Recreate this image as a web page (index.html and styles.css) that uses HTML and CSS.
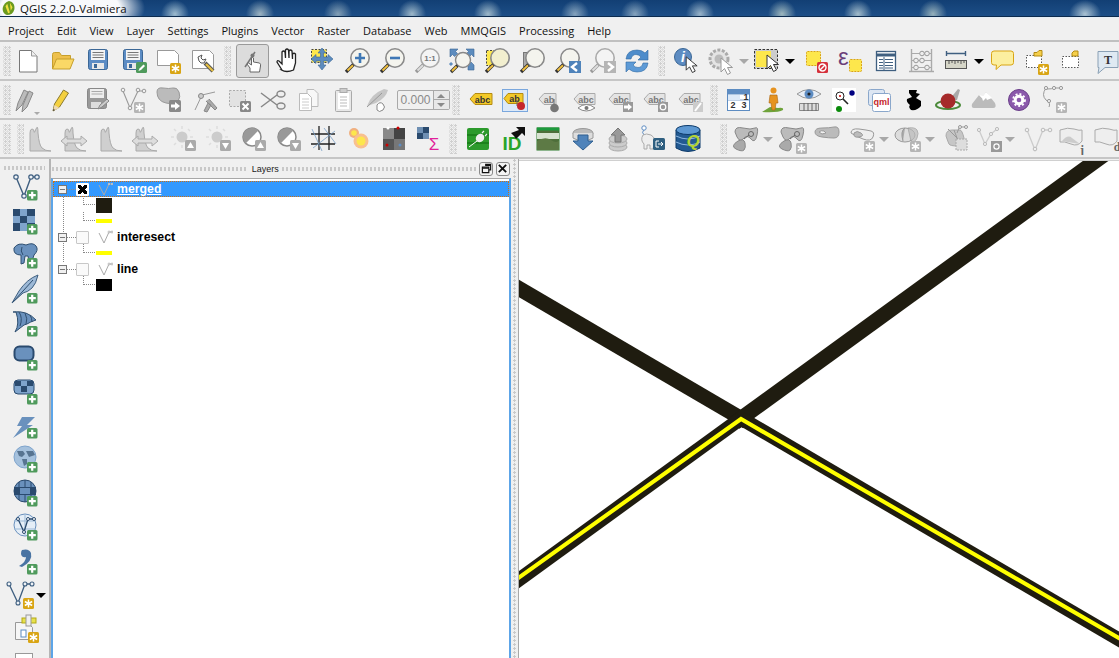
FILE: index.html
```html
<!DOCTYPE html>
<html lang="en">
<head>
<meta charset="utf-8">
<title>QGIS 2.2.0-Valmiera</title>
<link rel="stylesheet" href="styles.css">
</head>
<body>
<svg class="defs" aria-hidden="true">
<defs>
<symbol id="plus" viewBox="0 0 32 32"><rect x="17" y="19" width="10.5" height="10.5" rx="1.5" fill="#4f9a5c"/><path d="M22.2 20.800v7M18.800 24.200h7" stroke="#fff" stroke-width="2.2"/></symbol>
<symbol id="gold" viewBox="0 0 32 32"><rect x="18" y="18" width="11" height="11" rx="1.5" fill="#d9a514"/><path d="M23.5 19.5v8M19.8 21.5l7.4 4M19.8 25.5l7.4-4" stroke="#fff" stroke-width="1.5"/></symbol>
<symbol id="grey" viewBox="0 0 32 32"><rect x="18" y="18" width="11" height="11" rx="1.5" fill="#b5b5b5"/><path d="M23.5 19.5v8M19.8 21.5l7.4 4M19.8 25.5l7.4-4" stroke="#fff" stroke-width="1.5"/></symbol>
<symbol id="mag" viewBox="0 0 32 32"><circle cx="19" cy="13" r="9.2" fill="#f4f4ee" stroke="#8a8a8a" stroke-width="1.6"/><path d="M12.500 19.500L5 27" stroke="#333" stroke-width="3.4"/><path d="M12 20.200L6.500 25.500" stroke="#f0c040" stroke-width="1.9"/></symbol>
<symbol id="magg" viewBox="0 0 32 32"><circle cx="19" cy="13" r="9.2" fill="#f4f4f4" stroke="#aaa" stroke-width="1.6"/><path d="M12.500 19.500L5 27" stroke="#999" stroke-width="3.4"/><path d="M12 20.200L6.500 25.500" stroke="#ddd" stroke-width="1.9"/></symbol>
<symbol id="new" viewBox="0 0 32 32"><path d="M7.5 5.5h12l5.5 5.5v16H7.500z" fill="#fff" stroke="#777" stroke-width="1"/><path d="M19.500 5.500v5.500H25" fill="#eee" stroke="#999"/></symbol>
<symbol id="open" viewBox="0 0 32 32"><path d="M5.500 24V9.500q0-2 2-2h5l2 3h9v4" fill="#eec04c" stroke="#c69f2c"/><path d="M5.500 24l4-10h17.500l-4 10z" fill="#fad866" stroke="#c69f2c"/></symbol>
<symbol id="save" viewBox="0 0 32 32"><rect x="6.500" y="4.500" width="19" height="20" rx="2" fill="#5c8cc4" stroke="#3b6796"/><rect x="9" y="5" width="14" height="10" fill="#f4f4f4"/><path d="M10.500 7.500h11M10.500 10h11M10.500 12.500h11" stroke="#777"/><rect x="10" y="18" width="12" height="6" fill="#e8e8e8"/><rect x="12" y="19" width="3" height="4" fill="#3b6796"/></symbol>
<symbol id="sedit" viewBox="0 0 32 32"><use href="#save"/><rect x="19" y="17" width="11" height="11" rx="1.500" fill="#4f9a5c"/><path d="M21.500 26l1-2.500 4-4 1.500 1.500-4 4z" fill="#fff"/></symbol>
<symbol id="comp" viewBox="0 0 32 32"><path d="M5.500 5.500h17l4 4v11h-21z" fill="#fff" stroke="#999"/><use href="#gold"/></symbol>
<symbol id="mgr" viewBox="0 0 32 32"><path d="M5.500 5.500h17l4 4v14h-21z" fill="#fff" stroke="#999"/><path d="M11 12l4-2-1 3 2 2 3-1-2 4-3 0-2-2z" fill="#fff" stroke="#555"/><path d="M18 18l8 8" stroke="#555" stroke-width="4"/><path d="M19 19l7 7" stroke="#e6c042" stroke-width="2.200"/></symbol>
<symbol id="touch" viewBox="0 0 32 32"><path d="M9 22L19 7" stroke="#777" stroke-width="1.500"/><circle cx="16.500" cy="10.500" r="2" fill="#777"/><path d="M14 27v-4l-3-4 1.500-1 3 2v-7q1.500-1 2 0v4l6 1q1.500 1 1 3l-1 6z" fill="#fff" stroke="#666"/></symbol>
<symbol id="pan" viewBox="0 0 32 32"><path d="M11 25l-5-8q0-2 2-1l3 3V7q1.500-2 3 0l.5 6V5q1.500-2 3 0l.5 8V6q1.500-2 3 0l.5 8V9q1.500-1.500 3 0v9l-2 7q-7 3-12 0z" fill="#fff" stroke="#222" stroke-width="1.300"/></symbol>
<symbol id="panmap" viewBox="0 0 32 32"><rect x="5.500" y="4.500" width="15" height="13" fill="#fde74c" stroke="#444" stroke-dasharray="2 1.500"/><path d="M16 3l4 5h-2.500v4H22V9.500l5 4.500-5 4.500V16h-4.500v4H20l-4 5-4-5h2.500v-4H10v2.500L5 14l5-4.500V12h4.500V8H12z" fill="#5d8cbe" stroke="#3b6796" stroke-width=".6"/></symbol>
<symbol id="zin" viewBox="0 0 32 32"><use href="#mag"/><path d="M19 8v10M14 13h10" stroke="#3f78b5" stroke-width="2.600"/></symbol>
<symbol id="zout" viewBox="0 0 32 32"><use href="#mag"/><path d="M14 13h10" stroke="#3f78b5" stroke-width="2.600"/></symbol>
<symbol id="z11" viewBox="0 0 32 32"><use href="#magg"/><text x="19" y="16" class="st st8 g6" text-anchor="middle">1:1</text></symbol>
<symbol id="zfull" viewBox="0 0 32 32"><path d="M4 4h8l-2.500 2.500 2 2-3 3-2-2L4 12zM28 4v8l-2.500-2.500-2 2-3-3 2-2L20 4zM22 20l3-3 3 3v5h-6z" fill="#5d8cbe" stroke="#3b6796" stroke-width=".6"/><path d="M4 18l2 2" stroke="#5d8cbe" stroke-width="3"/><circle cx="17" cy="15" r="7.500" fill="#f4f4ee" stroke="#888" stroke-width="1.400"/><path d="M11.500 20.500L5 27" stroke="#333" stroke-width="3.200"/><path d="M10.500 21.500L6 26" stroke="#f0c040" stroke-width="1.800"/></symbol>
<symbol id="zsel" viewBox="0 0 32 32"><rect x="5.500" y="5.500" width="16" height="15" fill="#fde74c" stroke="#444" stroke-dasharray="2 1.500"/><circle cx="19" cy="13" r="9.200" fill="#f2efcf" stroke="#8a8a8a" stroke-width="1.600"/><path d="M12.500 19.500L5 27" stroke="#333" stroke-width="3.400"/><path d="M12 20.200L6.500 25.500" stroke="#f0c040" stroke-width="1.900"/></symbol>
<symbol id="zlay" viewBox="0 0 32 32"><rect x="7.500" y="7.500" width="16" height="14" fill="#aaa" stroke="#777"/><use href="#mag"/></symbol>
<symbol id="zlast" viewBox="0 0 32 32"><use href="#mag"/><rect x="18" y="16" width="12" height="12" fill="#4f83ba"/><path d="M26 18l-5 4 5 4" fill="none" stroke="#fff" stroke-width="2.400"/></symbol>
<symbol id="znext" viewBox="0 0 32 32"><use href="#magg"/><rect x="18" y="16" width="12" height="12" fill="#b5b5b5"/><path d="M22 18l5 4-5 4" fill="none" stroke="#fff" stroke-width="2.400"/></symbol>
<symbol id="refresh" viewBox="0 0 32 32"><path d="M5 14q1-9 11-9 5 0 8 3l3-3v10h-10l3-3q-2-2.500-5-2.500-4 0-5 4.500z" fill="#4d8ccb" stroke="#2f6aa3" stroke-width=".6"/><path d="M27 18q-1 9-11 9-5 0-8-3l-3 3V17h10l-3 3q2 2.500 5 2.500 4 0 5-4.500z" fill="#5d9ad6" stroke="#2f6aa3" stroke-width=".6"/></symbol>
<symbol id="cursor" viewBox="0 0 32 32"><path d="M16 13v14l3.500-3.500 3 6 3-1.500-3-5.500h5z" fill="#fff" stroke="#333"/></symbol>
<symbol id="ident" viewBox="0 0 32 32"><circle cx="13" cy="12" r="8.500" fill="#5d8cc2" stroke="#3b6796"/><text x="13" y="17" class="st st14 w i2" text-anchor="middle">i</text><use href="#cursor" transform="translate(1 -.5) scale(.95)"/></symbol>
<symbol id="action" viewBox="0 0 32 32"><circle cx="14" cy="14" r="9" fill="#e4e4e4" stroke="#aaa" stroke-width="3" stroke-dasharray="3 1.500"/><circle cx="14" cy="14" r="4.500" fill="#bbb"/><path d="M16 13v14l3.500-3.500 3 6 3-1.500-3-5.500h5z" fill="#fff" stroke="#999"/></symbol>
<symbol id="select" viewBox="0 0 32 32"><rect x="3.500" y="4.500" width="23" height="19" fill="#ccc" stroke="#333" stroke-dasharray="2.500 1.500"/><rect x="5" y="6" width="15" height="16" fill="#fde74c"/><use href="#cursor" transform="translate(0 -3)"/></symbol>
<symbol id="desel" viewBox="0 0 32 32"><rect x="6.500" y="6.500" width="14" height="14" rx="1" fill="#fde74c" stroke="#d9a514" stroke-dasharray="2 1"/><rect x="17" y="17" width="11" height="11" rx="1.500" fill="#d5303a"/><circle cx="22.500" cy="22.500" r="3.500" fill="none" stroke="#fff" stroke-width="1.400"/><path d="M20 25l5-5" stroke="#fff" stroke-width="1.400"/></symbol>
<symbol id="expr" viewBox="0 0 32 32"><text x="3" y="20" class="st st22 pur">&#949;</text><rect x="14.500" y="14.500" width="12" height="12" rx="1" fill="#fde74c" stroke="#d9a514" stroke-dasharray="2 1"/></symbol>
<symbol id="table" viewBox="0 0 32 32"><rect x="6.500" y="6.500" width="19" height="19" fill="#fff" stroke="#3f5f80" stroke-width="1.300"/><path d="M7 10h18" stroke="#3f5f80" stroke-width="3"/><path d="M9 14.500h4M15 14.500h8M9 17.500h4M15 17.500h8M9 20.500h4M15 20.500h8M9 23h4M15 23h8M14 12v13" stroke="#3f5f80"/></symbol>
<symbol id="stats" viewBox="0 0 32 32"><path d="M6.500 4v22M26.500 4v22M4 26.500h25" stroke="#aaa" stroke-width="1.400"/><path d="M6.500 8.500h20M6.500 15.500h20M6.500 22.500h20" stroke="#aaa"/><g fill="#eee" stroke="#999"><circle cx="17" cy="8.500" r="2.300"/><circle cx="22" cy="8.500" r="2.300"/><circle cx="11" cy="15.500" r="2.300"/><circle cx="17" cy="15.500" r="2.300"/><circle cx="11" cy="22.500" r="2.300"/><circle cx="22" cy="22.500" r="2.300"/></g></symbol>
<symbol id="measure" viewBox="0 0 32 32"><path d="M6 8.500h20M6.500 6v5M25.500 6v5" stroke="#3f5f80" stroke-width="1.400"/><rect x="5.500" y="15.500" width="21" height="8" fill="#d6d6c8" stroke="#555"/><path d="M9 16v3M12 16v2M15 16v3M18 16v2M21 16v3M24 16v2" stroke="#555"/></symbol>
<symbol id="annot" viewBox="0 0 32 32"><path d="M8 6h17q2.500 0 2.500 2.500v9q0 2.500-2.500 2.500H15l-5 4.500 .5-4.500H8q-2.500 0-2.500-2.500v-9Q5.500 6 8 6z" fill="#fcefa0" stroke="#d9a514"/></symbol>
<symbol id="flbl" viewBox="0 0 32 32"><rect x="5.500" y="10.500" width="15" height="12" fill="#fff" stroke="#555" stroke-dasharray="1.500 1.500"/><path d="M14 10V6.500h3l2-2h3v5.500h-5z" fill="#f5cf4a" stroke="#b48b12" transform="translate(-1 1)"/><use href="#gold" transform="translate(-1 1)"/></symbol>
<symbol id="flbl2" viewBox="0 0 32 32"><rect x="6.500" y="11.500" width="16" height="11" fill="#fff" stroke="#555" stroke-dasharray="1.500 1.500"/><path d="M16 11V8l2-2h4v5h-5z" fill="#f5cf4a" stroke="#b48b12"/></symbol>
<symbol id="tann" viewBox="0 0 32 32"><path d="M7 6.500h20v16H14l-7 6 1-6H7z" fill="#dfe9f2" stroke="#8aa0b5"/><text x="17" y="19" class="st st12 serif" text-anchor="middle">T</text></symbol>
<symbol id="pencils" viewBox="0 0 32 32"><path d="M5 27l2-8L13 6l4 2-6 13zM11 28l1-7 6-14 4 2-6 14z" fill="#bbb" stroke="#888"/><path d="M23 28h6l-3 3z" fill="#aaa"/></symbol>
<symbol id="pencil" viewBox="0 0 32 32"><path d="M7 27l1.500-7 9-14 5 3-9 14z" fill="#f4d03f" stroke="#8a7a30"/><path d="M7 27l1.500-6 5 3z" fill="#eed9b0"/><path d="M7 27l.500-2 1.500 1z" fill="#222"/></symbol>
<symbol id="sgrey" viewBox="0 0 32 32"><rect x="6.500" y="4.500" width="19" height="20" rx="2" fill="#999" stroke="#888"/><rect x="9" y="5" width="14" height="9" fill="#eee"/><path d="M10.500 7.500h11M10.500 10h11" stroke="#aaa"/><rect x="10" y="18" width="10" height="6" fill="#ddd"/><path d="M17 25l2-4 7-6 2 2-7 6z" fill="#ccc" stroke="#888"/></symbol>
<symbol id="addv" viewBox="0 0 32 32"><path d="M7 7l7 17L22 7M7 7h0M22 7h6" fill="none" stroke="#999" stroke-width="1.100"/><g fill="#f0f0f0" stroke="#999"><circle cx="7" cy="6" r="1.800"/><circle cx="14" cy="24" r="1.800"/><circle cx="22" cy="6" r="1.800"/><circle cx="28" cy="7" r="1.800"/></g><use href="#grey"/></symbol>
<symbol id="blobm" viewBox="0 0 32 32"><path d="M5 8q0-5 6-4 6 1 10 0t6 4-1 9-12 2-9-11z" fill="#bbb" stroke="#999"/><rect x="17" y="16" width="12" height="12" rx="1.500" fill="#8a8a8a"/><path d="M19 20.500h4V18l5 4-5 4v-2.500h-4z" fill="#fff"/></symbol>
<symbol id="node" viewBox="0 0 32 32"><path d="M6 26l7-15L26 8" fill="none" stroke="#999"/><circle cx="12" cy="12" r="2.500" fill="#ccc" stroke="#888"/><path d="M15 27l4-8 3 2-4 7zM17 17l9 9 2-2-8-9" fill="#aaa" stroke="#888"/></symbol>
<symbol id="delete" viewBox="0 0 32 32"><rect x="6.500" y="6.500" width="16" height="16" fill="#e2e2e2" stroke="#aaa" stroke-dasharray="2 1.500"/><rect x="17" y="17" width="11" height="11" rx="1.500" fill="#888"/><path d="M19.500 19.500l6 6M25.500 19.500l-6 6" stroke="#fff" stroke-width="2"/></symbol>
<symbol id="scis" viewBox="0 0 32 32"><path d="M4 9l16 12M4 23L20 11" stroke="#888" stroke-width="1.500"/><ellipse cx="24" cy="10" rx="4" ry="3" fill="#eee" stroke="#888" stroke-width="1.400"/><ellipse cx="24" cy="22" rx="4" ry="3" fill="#eee" stroke="#888" stroke-width="1.400"/></symbol>
<symbol id="copy" viewBox="0 0 32 32"><path d="M15 5.500h7l4 4v13H15z" fill="#f8f8f8" stroke="#bbb"/><path d="M7.500 9.500h8l4 4v13H7.500z" fill="#fff" stroke="#bbb"/><path d="M10 15h7M10 18h7M10 21h7M10 24h7" stroke="#ccc"/></symbol>
<symbol id="paste" viewBox="0 0 32 32"><rect x="8.500" y="6.500" width="16" height="21" rx="1" fill="#e8e8e8" stroke="#aaa"/><rect x="11" y="9" width="11" height="16" fill="#fff"/><rect x="13" y="4.500" width="7" height="4" fill="#ccc" stroke="#aaa"/><path d="M13 13h7M13 16h7M13 19h7M13 22h7" stroke="#bbb"/></symbol>
<symbol id="stamp" viewBox="0 0 32 32"><path d="M5 22Q9 10 22 5l4 1q-2 8-12 13z" fill="#c6c6c6"/><path d="M5 23L20 9" stroke="#999"/><path d="M15 21q3-4 6-1t0 6q-4 3-6 0z" fill="#fff" stroke="#888"/></symbol>
<symbol id="lbl" viewBox="0 0 32 32"><path d="M11 9.500h17v11H11l-5-5.500z" fill="#f3c928" stroke="#b48b12"/><text x="18.500" y="18.500" class="st st9b" text-anchor="middle">abc</text></symbol>
<symbol id="lblp" viewBox="0 0 32 32"><rect x="3.500" y="5.500" width="25" height="22" fill="#dce9f8" stroke="#7aa7dd"/><path d="M9 9.500h15v10H9l-4-5z" fill="#f3c928" stroke="#b48b12"/><text x="15.500" y="18" class="st st9b" text-anchor="middle">ab</text><path d="M18 16v6" stroke="#666"/><circle cx="22" cy="22" r="4" fill="#c5262c"/></symbol>
<symbol id="lgrey" viewBox="0 0 32 32"><path d="M10 9.500h16v11H10l-5-5.500z" fill="#e4e4e4" stroke="#aaa"/><text x="17" y="18.500" class="st st9b g7" text-anchor="middle">abc</text></symbol>
<symbol id="lpin" viewBox="0 0 32 32"><path d="M10 9.500h12v11H10l-5-5.500z" fill="#e4e4e4" stroke="#aaa"/><text x="15" y="18.500" class="st st9b g7" text-anchor="middle">ab</text><path d="M20 15v8" stroke="#666"/><circle cx="20.500" cy="24" r="4.300" fill="#777"/></symbol>
<symbol id="leye" viewBox="0 0 32 32"><use href="#lgrey"/><path d="M9 24q8-7 17 0-9 6-17 0z" fill="#fff" stroke="#888"/><circle cx="17.500" cy="24" r="2" fill="#777"/></symbol>
<symbol id="lmove" viewBox="0 0 32 32"><use href="#lgrey"/><rect x="19" y="18" width="10" height="10" fill="#999"/><path d="M20 21.500h4v-2l4 3.500-4 3.500v-2h-4z" fill="#fff"/></symbol>
<symbol id="lrot" viewBox="0 0 32 32"><use href="#lgrey"/><rect x="19" y="18" width="10" height="10" fill="#999"/><circle cx="24" cy="23" r="2.800" fill="none" stroke="#fff" stroke-width="1.200"/></symbol>
<symbol id="lsize" viewBox="0 0 32 32"><use href="#lgrey"/><rect x="19" y="18" width="10" height="10" fill="#ccc"/><path d="M21 27l6-8" stroke="#fff" stroke-width="2"/></symbol>
<symbol id="ltab" viewBox="0 0 32 32"><rect x="4.500" y="5.500" width="22" height="21" fill="#fff" stroke="#5d8cc2"/><path d="M5 8h21" stroke="#5d8cc2" stroke-width="5"/><path d="M5 16h21" stroke="#5d8cc2" stroke-width=".8"/><rect x="5" y="11" width="12" height="5" fill="#dce9f8"/><text x="23" y="15.500" class="st st9b" text-anchor="middle">1</text><text x="10" y="24" class="st st9b" text-anchor="middle">2</text><text x="21" y="24" class="st st9b" text-anchor="middle">3</text></symbol>
<symbol id="person" viewBox="0 0 32 32"><path d="M4 28l8-5 8 1q6-1 5 2-5 3-21 2z" fill="#6fa33b"/><circle cx="15.500" cy="6.500" r="3" fill="#e69320"/><path d="M12 11h7l1 8h-2l-1 7h-3l-1-7h-2z" fill="#e69320" stroke="#a96510" stroke-width=".6"/></symbol>
<symbol id="eyet" viewBox="0 0 32 32"><path d="M4 10q12-9 24 0-12 9-24 0z" fill="#e8eef6" stroke="#999"/><circle cx="16" cy="10" r="4.500" fill="#5d8cc2"/><circle cx="16" cy="10" r="1.600" fill="#222"/><path d="M6.500 19.500h19v7h-19z" fill="#ddd" stroke="#888"/><path d="M11 19v8M15 19v8M19 19v8M23 19v8" stroke="#666"/></symbol>
<symbol id="search" viewBox="0 0 32 32"><rect x="4" y="4" width="24" height="24" fill="#fff"/><circle cx="24" cy="9" r="2.700" fill="#000080"/><circle cx="11" cy="25" r="3" fill="#0a8a0a"/><circle cx="12" cy="12" r="4" fill="#fff" stroke="#222"/><circle cx="12" cy="12" r="1" fill="#c00"/><path d="M15 15l5 5" stroke="#222" stroke-width="1.600"/></symbol>
<symbol id="qml" viewBox="0 0 32 32"><rect x="5.500" y="5.500" width="16" height="16" rx="2" fill="#dce6f3" stroke="#8aa7cb"/><rect x="9.500" y="9.500" width="18" height="18" rx="2" fill="#fff" stroke="#8aa7cb"/><text x="18.500" y="21" class="st st9b red" text-anchor="middle">qml</text></symbol>
<symbol id="blk" viewBox="0 0 32 32"><path d="M11 6h8l-1 3 4 1-4 4 5 3v5q-4 5-10 4-3-3-1-5-4-3-3-6l5-2-3-4z" fill="#000"/></symbol>
<symbol id="redb" viewBox="0 0 32 32"><path d="M16 16L25 5l2 1-3 10z" fill="#aaa"/><ellipse cx="15" cy="21" rx="12" ry="4" fill="none" stroke="#4b8a3a" stroke-width="2"/><circle cx="15" cy="17" r="7.500" fill="#a52a2a"/></symbol>
<symbol id="mount" viewBox="0 0 32 32"><path d="M6 24q-3 0-2-4l7-9 3 3 4-6 9 11q2 5-2 5z" fill="#bbb"/><path d="M11 11l3 3 1 3 3-3 1 2 5-2-6-6-3 4z" fill="#fff"/></symbol>
<symbol id="purple" viewBox="0 0 32 32"><circle cx="16" cy="16" r="10.500" fill="#8b59ab" stroke="#6b3f8a"/><circle cx="16" cy="16" r="3.800" fill="none" stroke="#fff" stroke-width="3" /><circle cx="16" cy="16" r="6" fill="none" stroke="#fff" stroke-width="1.800" stroke-dasharray="2 2"/></symbol>
<symbol id="gverts" viewBox="0 0 32 32"><path d="M8 4q-5 7 0 12 5 3 3 7M9 5q5 0 7-1h6" fill="none" stroke="#999"/><g fill="#f0f0f0" stroke="#999"><circle cx="8" cy="4" r="1.600"/><circle cx="16" cy="4" r="1.600"/><circle cx="23" cy="4" r="1.600"/><circle cx="11" cy="17" r="1.600"/></g><use href="#grey"/></symbol>
<symbol id="hist" viewBox="0 0 32 32"><path d="M6 28V10q0-4 2-4t2 2.500T12 6t2 4q1 12 4 15t9 3z" fill="#cfcfcf" stroke="#aaa"/></symbol>
<symbol id="hista" viewBox="0 0 32 32"><use href="#hist"/><path d="M2 18l6-5v3h14v-3l6 5-6 5v-3H8v3z" fill="#ddd" stroke="#aaa"/></symbol>
<symbol id="sunu" viewBox="0 0 32 32"><circle cx="14" cy="14" r="5.500" fill="#ccc"/><path d="M14 3v3M14 22v3M3 14h3M22 14h3M6 6l2 2M20 6l2 2M6 22l2-2" stroke="#ddd" stroke-width="1.500"/><rect x="17" y="17" width="11" height="11" rx="1.500" fill="#aaa"/><path d="M22.500 19l3.500 6h-7z" fill="#fff"/></symbol>
<symbol id="sund" viewBox="0 0 32 32"><circle cx="14" cy="14" r="5.500" fill="#ccc"/><path d="M14 3v3M14 22v3M3 14h3M22 14h3M6 6l2 2M20 6l2 2M6 22l2-2" stroke="#ddd" stroke-width="1.500"/><rect x="17" y="17" width="11" height="11" rx="1.500" fill="#aaa"/><path d="M22.500 26l3.500-6h-7z" fill="#fff"/></symbol>
<symbol id="ctu" viewBox="0 0 32 32"><circle cx="14" cy="14" r="9" fill="#fff" stroke="#888" stroke-width="1.500"/><path d="M20.400 7.600A9 9 0 0 1 7.600 20.400z" fill="#999" transform="rotate(180 14 14)"/><rect x="17" y="17" width="11" height="11" rx="1.500" fill="#aaa"/><path d="M22.500 19l3.500 6h-7z" fill="#fff"/></symbol>
<symbol id="ctd" viewBox="0 0 32 32"><circle cx="14" cy="14" r="9" fill="#fff" stroke="#888" stroke-width="1.500"/><path d="M20.400 7.600A9 9 0 0 1 7.600 20.400z" fill="#999" transform="rotate(180 14 14)"/><rect x="17" y="17" width="11" height="11" rx="1.500" fill="#aaa"/><path d="M22.500 26l3.500-6h-7z" fill="#fff"/></symbol>
<symbol id="grid" viewBox="0 0 32 32"><path d="M3 11h24M3 21h24M11 3v24M21 3v24" stroke="#222" stroke-width="1.300"/><path d="M4 6l10 22M16 5l12 16M5 25l22-17" stroke="#7aa0c6" stroke-width=".8"/></symbol>
<symbol id="heat" viewBox="0 0 32 32"><circle cx="11" cy="10" r="5" fill="#f0b080"/><circle cx="18" cy="18" r="7.500" fill="#f8c090"/><circle cx="11" cy="10" r="2.800" fill="#fde74c"/><circle cx="18" cy="18" r="4.500" fill="#fde74c"/></symbol>
<symbol id="rstr" viewBox="0 0 32 32"><rect x="5" y="5" width="11" height="11" fill="#888"/><rect x="16" y="5" width="11" height="11" fill="#444"/><rect x="5" y="16" width="11" height="11" fill="#555"/><rect x="16" y="16" width="11" height="11" fill="#777"/><circle cx="10" cy="5" r="1.500" fill="#fff"/><circle cx="20" cy="5" r="1.500" fill="#c00"/><circle cx="9" cy="22" r="1.500" fill="#c00"/><circle cx="22" cy="22" r="1.500" fill="#5d8cc2"/></symbol>
<symbol id="sigma" viewBox="0 0 32 32"><rect x="4" y="4" width="6" height="6" fill="#6e8fb3"/><rect x="10" y="4" width="6" height="6" fill="#2a4a6e"/><rect x="4" y="10" width="6" height="6" fill="#2a4a6e"/><rect x="10" y="10" width="6" height="6" fill="#6e8fb3"/><text x="21" y="27" class="st st16 pink" text-anchor="middle">&#931;</text></symbol>
<symbol id="plug" viewBox="0 0 32 32"><rect x="5" y="5" width="22" height="22" rx="2" fill="#2c9a2c"/><path d="M5 12h22M5 20h22" stroke="#0d6a0d"/><path d="M7 24l8-6" stroke="#fff"/><ellipse cx="18" cy="15" rx="4" ry="4.500" fill="#eee" transform="rotate(45 18 15)"/><path d="M20 10l2-2M23 13l2-2" stroke="#eee" stroke-width="1.200"/></symbol>
<symbol id="idk" viewBox="0 0 32 32"><text x="15" y="27" class="st st20b grn" text-anchor="middle">ID</text><path d="M14 10l8-3-3-3h9v9l-3-3-6 6-2-3z" fill="#111"/></symbol>
<symbol id="photo" viewBox="0 0 32 32"><rect x="5" y="5" width="22" height="22" fill="#4e6e3a" stroke="#2b7a2b"/><rect x="5" y="4.500" width="22" height="3" fill="#1d9a3d"/><rect x="5" y="10" width="22" height="6" fill="#d7e2d0"/><path d="M5 18q8-5 14-1t8 0v10H5z" fill="#5d7a45"/></symbol>
<symbol id="down" viewBox="0 0 32 32"><ellipse cx="16" cy="10" rx="10" ry="4.500" fill="#bbb" stroke="#999"/><path d="M6 10v5q10 6 20 0v-5" fill="#ddd" stroke="#999"/><path d="M11 12h10v6h5l-10 9-10-9h5z" fill="#4f83ba" stroke="#2f5f90"/></symbol>
<symbol id="up" viewBox="0 0 32 32"><g fill="#ccc" stroke="#aaa"><ellipse cx="16" cy="24" rx="9" ry="4"/><ellipse cx="16" cy="20" rx="9" ry="4"/><ellipse cx="16" cy="16" rx="9" ry="4"/></g><path d="M16 5l7 7h-4v7h-6v-7H9z" fill="#999" stroke="#777"/></symbol>
<symbol id="eleph" viewBox="0 0 32 32"><path d="M7 12q-3-3 0-5" fill="none" stroke="#5d8cc2"/><circle cx="7" cy="5" r="2.200" fill="#fff" stroke="#5d8cc2"/><path d="M6 12q3-2 8 0 6 4 3 10l-1 4h-3v-4h-3v4H7v-5q-4-4-1-9z" fill="#eee" stroke="#aaa"/><rect x="16" y="15" width="12" height="12" rx="1.500" fill="#2f5f80"/><path d="M22 18h-3v6h3M21 21h5M24 19l2 2-2 2" fill="none" stroke="#fff"/></symbol>
<symbol id="db" viewBox="0 0 32 32"><path d="M4 7v18q12 7 24 0V7" fill="#235a92" stroke="#0d3a6a"/><ellipse cx="16" cy="7" rx="12" ry="4.500" fill="#5d98d2" stroke="#0d3a6a"/><path d="M4 13q12 6 24 0M4 19q12 6 24 0" fill="none" stroke="#8ab5e0"/><text x="21" y="24" class="st st16 lime i2" text-anchor="middle">Q</text></symbol>
<symbol id="shape" viewBox="0 0 32 32"><path d="M5 9q0-6 8-4t12 0 2 7-6 4-8 0-8-7z" fill="#bbb" stroke="#888"/><path d="M8 18q6-3 7 2t-1 7-8-1 2-8z" fill="#aaa" stroke="#888"/><circle cx="21" cy="11" r="2.500" fill="none" stroke="#666"/><path d="M14 16l5-4" stroke="#666"/></symbol>
<symbol id="shapes" viewBox="0 0 32 32"><use href="#shape"/><use href="#grey" transform="translate(2 2)"/></symbol>
<symbol id="ring" viewBox="0 0 32 32"><path d="M4 9q0-4 7-4t12-1 5 5-5 6-12-1-7-5z" fill="#bbb" stroke="#999"/><path d="M8 9q2-2 5-1l2 2-4 1z" fill="#f0f0f0" stroke="#999"/></symbol>
<symbol id="part" viewBox="0 0 32 32"><path d="M5 10q0-5 8-4t12 2 2 6-10 2-12-6z" fill="#eee" stroke="#999"/><path d="M8 10q3-3 7 0t-2 4-5-4z" fill="#bbb" stroke="#999"/><use href="#grey"/></symbol>
<symbol id="merge" viewBox="0 0 32 32"><ellipse cx="13" cy="12" rx="10" ry="7" fill="#ddd" stroke="#999"/><path d="M13 5q-5 3-2 13" fill="#aaa" stroke="#999"/><path d="M16 5q7-1 9 2t0 8-6 3z" fill="#bbb" stroke="#999" opacity=".7"/><use href="#grey"/></symbol>
<symbol id="union" viewBox="0 0 32 32"><path d="M6 13q0-6 6-6t8 0 4 8-6 8-9-2-3-8z" fill="#c6c6c6" stroke="#aaa"/><path d="M14 7l6 16M8 6l14 14" stroke="#999"/><rect x="16" y="16" width="11" height="11" fill="#ddd" stroke="#aaa" stroke-dasharray="2 1"/><g fill="#eee" stroke="#999"><circle cx="20" cy="4" r="1.500"/><circle cx="26" cy="4" r="1.500"/></g><path d="M21 4h4M19 5l-2 5" stroke="#999"/></symbol>
<symbol id="vsplit" viewBox="0 0 32 32"><path d="M6 7l6 14 6-10 6-5" fill="none" stroke="#ccc" stroke-width="1.300"/><g fill="#eee" stroke="#bbb"><circle cx="6" cy="7" r="1.600"/><circle cx="12" cy="21" r="1.600"/><circle cx="18" cy="11" r="1.600"/><circle cx="24" cy="6" r="1.600"/></g><rect x="18" y="18" width="11" height="11" fill="#999"/><circle cx="23.500" cy="23.500" r="2.600" fill="none" stroke="#fff" stroke-width="1.200"/></symbol>
<symbol id="vee" viewBox="0 0 32 32"><path d="M6 7l8 20 8-20h7" fill="none" stroke="#ccc" stroke-width="1.300"/><g fill="#f0f0f0" stroke="#bbb"><circle cx="6" cy="7" r="1.800"/><circle cx="14" cy="26" r="1.800"/><circle cx="22" cy="7" r="1.800"/><circle cx="29" cy="7" r="1.800"/></g></symbol>
<symbol id="shapeJ" viewBox="0 0 32 32"><path d="M4 7q8-3 14-1t8 1v11q-4 6-11 3t-11-2z" fill="#eee" stroke="#aaa"/><path d="M6 18q6-7 10-3l8 6" fill="#ccc"/><text x="26" y="31" class="st st12 serif g5" text-anchor="middle">j</text></symbol>
<symbol id="shapeD" viewBox="0 0 32 32"><path d="M4 7q8-3 14-1t8 1v11q-4 6-11 3t-11-2z" fill="#eee" stroke="#aaa"/><text x="26" y="28" class="st st12 serif g5" text-anchor="middle">d</text></symbol>
<symbol id="vplus" viewBox="0 0 32 32"><path d="M7 6l8 19 7-19h6" fill="none" stroke="#3f5f80" stroke-width="1.400"/><g fill="#eef2f6" stroke="#3f5f80" stroke-width="1.200"><circle cx="7" cy="6" r="2.200"/><circle cx="15" cy="25" r="2.200"/><circle cx="22" cy="6" r="2.200"/><circle cx="28" cy="6" r="2.200"/></g><use href="#plus" transform="translate(1 0)"/></symbol>
<symbol id="rplus" viewBox="0 0 32 32"><rect x="4" y="4" width="22" height="22" fill="#7fa4cc"/><rect x="4" y="4" width="7" height="7" fill="#2a4a6e"/><rect x="18" y="4" width="8" height="7" fill="#2a4a6e"/><rect x="11" y="11" width="7" height="7" fill="#2a4a6e"/><rect x="4" y="18" width="7" height="8" fill="#2a4a6e"/><rect x="18" y="18" width="8" height="8" fill="#2a4a6e"/><use href="#plus" transform="translate(1 0)"/></symbol>
<symbol id="pgplus" viewBox="0 0 32 32"><path d="M5 9q4-6 12-3 7-3 10 1 3 4-2 9l-2 6h-3l-1-5-3 0-1 7-3 1v-9q-8 0-7-7z" fill="#6a91bd" stroke="#2f4f70"/><path d="M13 8q-2 4 1 8" fill="none" stroke="#2f4f70"/><use href="#plus" transform="translate(1 0)"/></symbol>
<symbol id="fplus" viewBox="0 0 32 32"><path d="M3 30L10 18Q18 6 29 2q-2 9-6 13t-9 5z" fill="#9db9d7" stroke="#3f5f80"/><path d="M4 29L24 7" stroke="#2f4f70"/><use href="#plus" transform="translate(1 1)"/></symbol>
<symbol id="wplus" viewBox="0 0 32 32"><path d="M4 5q14-2 23 8-6 2-9 4l-3 1-9 7q5-8 1-20z" fill="#6a91bd" stroke="#2f4f70"/><path d="M10 5q4 6 1 14M16 6q3 6 1 11M21 8q2 3 2 7" stroke="#2f4f70" fill="none"/><use href="#plus" transform="translate(1 0)"/></symbol>
<symbol id="rectplus" viewBox="0 0 32 32"><rect x="5.500" y="5.500" width="19" height="14" rx="5" fill="#6a91bd" stroke="#2a4a6e" stroke-width="2"/><use href="#plus" transform="translate(1 0)"/></symbol>
<symbol id="chkplus" viewBox="0 0 32 32"><rect x="5" y="5" width="20" height="14" rx="4" fill="#7fa4cc" stroke="#2a4a6e"/><rect x="6" y="6" width="6" height="5" fill="#2a4a6e"/><rect x="18" y="6" width="6" height="5" fill="#2a4a6e"/><rect x="12" y="11" width="6" height="6" fill="#2a4a6e"/><use href="#plus" transform="translate(1 0)"/></symbol>
<symbol id="ltplus" viewBox="0 0 32 32"><path d="M13 8h13L18 16h6L4 29l9-12H8z" fill="#6a91bd"/><use href="#plus" transform="translate(1 0)"/></symbol>
<symbol id="globe" viewBox="0 0 32 32"><circle cx="16" cy="14" r="11" fill="#a5c1dd" stroke="#7fa4cc"/><path d="M8 8h6l2 3-3 3-3-1zM17 8h7l2 4-6 2zM13 16h5v5l-3 2z" fill="#44607e" opacity=".8"/><use href="#plus" transform="translate(1 0)"/></symbol>
<symbol id="globe2" viewBox="0 0 32 32"><circle cx="16" cy="14" r="11" fill="#6a91bd" stroke="#2a4a6e"/><path d="M5 10h22v8H5z" fill="#2a4a6e" /><path d="M10 5v18M22 5v18M16 3v22" stroke="#2a4a6e" fill="none"/><path d="M11 11h10v6H11z" fill="#6a91bd"/><use href="#plus" transform="translate(1 0)"/></symbol>
<symbol id="globe3" viewBox="0 0 32 32"><circle cx="16" cy="14" r="11" fill="#e5eef7" stroke="#6a91bd"/><path d="M5 10h22M5 18h22M16 3v22" stroke="#9bb9d7"/><path d="M9 8l6 13 4-13h6" fill="none" stroke="#2a4a6e" stroke-width="1.300"/><g fill="#fff" stroke="#2a4a6e"><circle cx="9" cy="8" r="1.500"/><circle cx="15" cy="21" r="1.500"/><circle cx="19" cy="8" r="1.500"/><circle cx="25" cy="8" r="1.500"/></g><use href="#plus" transform="translate(1 0)"/></symbol>
<symbol id="comma" viewBox="0 0 32 32"><path d="M13 5q7-2 9 3 2 8-9 14l-3-1q7-4 7-9-4 1-5-3 0-3 1-4z" fill="#4a74a3"/><use href="#plus" transform="translate(1 0)"/></symbol>
<symbol id="vgold" viewBox="0 0 32 32"><path d="M5 5l9 19 7-19h7" fill="none" stroke="#3f5f80" stroke-width="1.300"/><g fill="#eef2f6" stroke="#3f5f80" stroke-width="1.100"><circle cx="5" cy="5" r="2"/><circle cx="14" cy="24" r="2"/><circle cx="21" cy="5" r="2"/><circle cx="28" cy="5" r="2"/></g><use href="#gold" transform="translate(1 1)"/></symbol>
<symbol id="compose" viewBox="0 0 32 32"><path d="M6.500 9.500h12l5 5v12h-17z" fill="#f6f6f6" stroke="#999"/><rect x="12" y="17" width="5" height="7" fill="#fff" stroke="#5d8cc2"/><rect x="13" y="5" width="14" height="5" fill="#e6e14c" stroke="#b4a914" /><rect x="17" y="2" width="5" height="11" fill="#f0f0f0" stroke="#999"/><use href="#gold" transform="translate(1 1)"/></symbol>
<symbol id="tline" viewBox="0 0 16 16"><path d="M2 4l5 10 5-11h3" fill="none" stroke="#aaa"/><circle cx="12" cy="3" r="1" fill="#fff" stroke="#999" stroke-width=".6"/><circle cx="15" cy="3" r="1" fill="#fff" stroke="#999" stroke-width=".6"/></symbol>
<symbol id="logo" viewBox="0 0 16 18"><path d="M8 1c5 1 7 5 6 10-1 4-4 6-8 6-4-1-6-5-5-9 1-3 3-6 7-7z" fill="#6a9a1f"/><path d="M6 4l3 10-2 1L4 7zM9 3l3 5-2 4z" fill="#f0e040"/></symbol>
</defs>
</svg>

<header class="titlebar">
  <svg class="logo"><use href="#logo"/></svg>
  <span class="title">QGIS 2.2.0-Valmiera</span>
</header>

<nav class="menubar">
  <span>Project</span><span>Edit</span><span>View</span><span>Layer</span><span>Settings</span><span>Plugins</span><span>Vector</span><span>Raster</span><span>Database</span><span>Web</span><span>MMQGIS</span><span>Processing</span><span>Help</span>
</nav>

<div class="toolbar">
  <i class="grip"></i>
  <b class="b"><svg><use href="#new"/></svg></b><b class="b"><svg><use href="#open"/></svg></b><b class="b"><svg><use href="#save"/></svg></b><b class="b"><svg><use href="#sedit"/></svg></b><b class="b"><svg><use href="#comp"/></svg></b><b class="b"><svg><use href="#mgr"/></svg></b>
  <i class="sep"><i class="grip"></i></i>
  <b class="b on"><svg><use href="#touch"/></svg></b><b class="b"><svg><use href="#pan"/></svg></b><b class="b"><svg><use href="#panmap"/></svg></b><b class="b"><svg><use href="#zin"/></svg></b><b class="b"><svg><use href="#zout"/></svg></b><b class="b"><svg><use href="#z11"/></svg></b><b class="b"><svg><use href="#zfull"/></svg></b><b class="b"><svg><use href="#zsel"/></svg></b><b class="b"><svg><use href="#zlay"/></svg></b><b class="b"><svg><use href="#zlast"/></svg></b><b class="b"><svg><use href="#znext"/></svg></b><b class="b"><svg><use href="#refresh"/></svg></b>
  <i class="sep"><i class="grip"></i></i>
  <b class="b"><svg><use href="#ident"/></svg></b><b class="b"><svg><use href="#action"/></svg></b><i class="d gd"></i><b class="b"><svg><use href="#select"/></svg></b><i class="d mr3"></i><b class="b"><svg><use href="#desel"/></svg></b><b class="b"><svg><use href="#expr"/></svg></b><b class="b"><svg><use href="#table"/></svg></b><b class="b"><svg><use href="#stats"/></svg></b><b class="b"><svg><use href="#measure"/></svg></b><i class="d"></i><b class="b"><svg><use href="#annot"/></svg></b><b class="b"><svg><use href="#flbl"/></svg></b><b class="b"><svg><use href="#flbl2"/></svg></b><b class="b"><svg><use href="#tann"/></svg></b>
</div>

<div class="toolbar">
  <i class="grip"></i>
  <b class="b n34"><svg><use href="#pencils"/></svg></b><b class="b"><svg><use href="#pencil"/></svg></b><b class="b"><svg><use href="#sgrey"/></svg></b><b class="b"><svg><use href="#addv"/></svg></b><b class="b w37"><svg><use href="#blobm"/></svg></b><b class="b w37"><svg><use href="#node"/></svg></b><b class="b n32"><svg><use href="#delete"/></svg></b><b class="b"><svg><use href="#scis"/></svg></b><b class="b"><svg><use href="#copy"/></svg></b><b class="b"><svg><use href="#paste"/></svg></b><b class="b"><svg><use href="#stamp"/></svg></b>
  <span class="spin"><span class="val">0.000</span><span class="arrows"><i class="up"></i><i class="dn"></i></span></span>
  <i class="sep s12"><i class="grip"></i></i>
  <b class="b"><svg><use href="#lbl"/></svg></b><b class="b"><svg><use href="#lblp"/></svg></b><b class="b"><svg><use href="#lpin"/></svg></b><b class="b"><svg><use href="#leye"/></svg></b><b class="b"><svg><use href="#lmove"/></svg></b><b class="b"><svg><use href="#lrot"/></svg></b><b class="b"><svg><use href="#lsize"/></svg></b>
  <i class="sep"><i class="grip"></i></i>
  <b class="b"><svg><use href="#ltab"/></svg></b><b class="b"><svg><use href="#person"/></svg></b><b class="b"><svg><use href="#eyet"/></svg></b><b class="b"><svg><use href="#search"/></svg></b><b class="b"><svg><use href="#qml"/></svg></b><b class="b"><svg><use href="#blk"/></svg></b><b class="b"><svg><use href="#redb"/></svg></b><b class="b"><svg><use href="#mount"/></svg></b><b class="b"><svg><use href="#purple"/></svg></b><b class="b"><svg><use href="#gverts"/></svg></b>
</div>

<div class="toolbar">
  <i class="grip"></i><i class="grip g2"></i>
  <b class="b n32"><svg><use href="#hist"/></svg></b><b class="b w37"><svg><use href="#hista"/></svg></b><b class="b"><svg><use href="#hist"/></svg></b><b class="b mr3"><svg><use href="#hista"/></svg></b><b class="b"><svg><use href="#sunu"/></svg></b><b class="b"><svg><use href="#sund"/></svg></b><b class="b"><svg><use href="#ctu"/></svg></b><b class="b"><svg><use href="#ctd"/></svg></b><b class="b"><svg><use href="#grid"/></svg></b><b class="b"><svg><use href="#heat"/></svg></b><b class="b"><svg><use href="#rstr"/></svg></b><b class="b"><svg><use href="#sigma"/></svg></b>
  <i class="sep"><i class="grip"></i></i>
  <b class="b"><svg><use href="#plug"/></svg></b><b class="b"><svg><use href="#idk"/></svg></b><b class="b"><svg><use href="#photo"/></svg></b><b class="b"><svg><use href="#down"/></svg></b><b class="b"><svg><use href="#up"/></svg></b><b class="b"><svg><use href="#eleph"/></svg></b><b class="b"><svg><use href="#db"/></svg></b>
  <i class="sep s23"><i class="grip"></i></i>
  <b class="b"><svg><use href="#shape"/></svg></b><i class="d gd"></i><b class="b"><svg><use href="#shapes"/></svg></b><b class="b"><svg><use href="#ring"/></svg></b><b class="b"><svg><use href="#part"/></svg></b><i class="d gd"></i><b class="b"><svg><use href="#merge"/></svg></b><i class="d gd mr3"></i><b class="b n33"><svg><use href="#union"/></svg></b><b class="b n33"><svg><use href="#vsplit"/></svg></b><i class="d gd mr3"></i><b class="b"><svg><use href="#vee"/></svg></b><b class="b"><svg><use href="#shapeJ"/></svg></b><b class="b"><svg><use href="#shapeD"/></svg></b>
</div>

<main class="main">
  <aside class="sidebar">
    <i class="hgrip"></i>
    <b class="s"><svg><use href="#vplus"/></svg></b>
    <b class="s"><svg><use href="#rplus"/></svg></b>
    <b class="s"><svg><use href="#pgplus"/></svg></b>
    <b class="s"><svg><use href="#fplus"/></svg></b>
    <b class="s"><svg><use href="#wplus"/></svg></b>
    <b class="s"><svg><use href="#rectplus"/></svg></b>
    <b class="s"><svg><use href="#chkplus"/></svg></b>
    <b class="s"><svg><use href="#ltplus"/></svg></b>
    <b class="s"><svg><use href="#globe"/></svg></b>
    <b class="s"><svg><use href="#globe2"/></svg></b>
    <b class="s"><svg><use href="#globe3"/></svg></b>
    <b class="s"><svg><use href="#comma"/></svg></b>
    <b class="s sd"><svg><use href="#vgold"/></svg><i class="d"></i></b>
    <b class="s"><svg><use href="#compose"/></svg></b>
    <i class="stub"></i>
  </aside>

  <section class="dock">
    <div class="dockhead">
      <i class="hdots"></i><span class="docktitle">Layers</span><i class="hdots"></i>
      <span class="dbtn"><svg viewBox="0 0 12 12"><path d="M4.500 1.500h6v6h-2M1.500 4.500h7v6h-7z" fill="none" stroke="#111" stroke-width="1.300"/><path d="M4.500 2.500h6M1.500 5.500h7" stroke="#111" stroke-width="1.300"/></svg></span>
      <span class="dbtn"><svg viewBox="0 0 12 12"><path d="M2 2l8 8M10 2l-8 8" stroke="#111" stroke-width="2"/></svg></span>
    </div>
    <div class="tree">
      <i class="vline"></i>
      <div class="row layer sel">
        <i class="exp"></i><i class="lnk"></i><i class="chk checked"></i><svg class="tl"><use href="#tline"/></svg><span class="name cur">merged</span>
      </div>
      <div class="row child tall"><i class="cl"></i><i class="box dark"></i></div>
      <div class="row child"><i class="cl"></i><i class="yl"></i></div>
      <div class="row layer">
        <i class="exp"></i><i class="lnk"></i><i class="chk"></i><svg class="tl"><use href="#tline"/></svg><span class="name">interesect</span>
      </div>
      <div class="row child"><i class="cl"></i><i class="yl"></i></div>
      <div class="row layer">
        <i class="exp"></i><i class="lnk"></i><i class="chk"></i><svg class="tl"><use href="#tline"/></svg><span class="name">line</span>
      </div>
      <div class="row child"><i class="cl"></i><i class="box blk"></i></div>
    </div>
  </section>

  <i class="split"></i>

  <section class="canvas">
    <svg class="map" viewBox="519 161 600 497" preserveAspectRatio="xMinYMin slice">
      <path class="ln up15" d="M500 277.400L747 421.900"/>
      <path class="ln up15" d="M735 422.800L1115 146.900"/>
      <path class="ln" d="M500 593.400L741 418.400"/>
      <path class="ln" d="M741 418.400L1139 651.200"/>
      <path class="yw" d="M510 584L741 419L1130 644.500"/>
    </svg>
  </section>
</main>
</body>
</html>
```
FILE: styles.css
```css
* { box-sizing: border-box; }
html, body { margin: 0; height: 100%; overflow: hidden; }
body {
  width: 1119px; height: 658px; background: #f0f0f0; color: #000;
  font-family: "Liberation Sans", Arial, sans-serif; font-size: 12px;
  display: flex; flex-direction: column;
}
i, b { font-style: normal; font-weight: normal; display: block; }
.defs { position: absolute; width: 0; height: 0; }

.titlebar {
  height: 18px; flex: none; display: flex; align-items: center; padding: 0 0 1px 2px; overflow: hidden;
  border-bottom: 1px solid #e7eff6; box-shadow: inset 0 -1px 0 #0d2b4e;
  background:
    radial-gradient(ellipse 85px 34px at 60px 8px, rgba(255,255,255,.97) 70%, rgba(255,255,255,0) 100%),
    radial-gradient(ellipse 14px 14px at 175px 14px, rgba(190,215,225,.8), rgba(190,215,225,0)),
    radial-gradient(ellipse 14px 14px at 260px 14px, rgba(200,215,215,.75), rgba(200,215,215,0)),
    radial-gradient(ellipse 14px 14px at 338px 14px, rgba(200,215,215,.6), rgba(200,215,215,0)),
    radial-gradient(ellipse 14px 14px at 412px 14px, rgba(200,220,225,.75), rgba(200,220,225,0)),
    radial-gradient(ellipse 14px 14px at 488px 14px, rgba(200,220,225,.75), rgba(200,220,225,0)),
    radial-gradient(ellipse 14px 14px at 575px 14px, rgba(190,210,220,.65), rgba(190,210,220,0)),
    radial-gradient(ellipse 14px 14px at 635px 14px, rgba(190,210,220,.65), rgba(190,210,220,0)),
    radial-gradient(ellipse 14px 14px at 700px 14px, rgba(195,215,225,.75), rgba(195,215,225,0)),
    radial-gradient(ellipse 14px 14px at 782px 14px, rgba(190,210,205,.8), rgba(190,210,205,0)),
    radial-gradient(ellipse 14px 14px at 858px 14px, rgba(195,215,220,.8), rgba(195,215,220,0)),
    radial-gradient(ellipse 14px 14px at 933px 14px, rgba(190,210,205,.75), rgba(190,210,205,0)),
    radial-gradient(ellipse 16px 14px at 1085px 14px, rgba(195,215,225,.85), rgba(195,215,225,0)),
    linear-gradient(#123f74, #1d4f88);
}
.logo { width: 14px; height: 16px; flex: none; }
.title { margin-left: 4px; font-family: "Open Sans", sans-serif; font-size: 11.500px; color: #111; white-space: nowrap; }

.menubar {
  height: 24px; flex: none; display: flex; align-items: center; padding: 2px 0 0 1.600px;
  border-bottom: 2px solid #c0c0c0; font-family: "Open Sans", sans-serif; font-size: 11px; color: #111;
}
.menubar span { padding: 0 6.500px; white-space: nowrap; }

.toolbar {
  height: 39px; flex: none; display: flex; align-items: center; padding: 0 0 0 3px; overflow: hidden;
  border-bottom: 2px solid #c6c6c6;
}
.grip {
  width: 7.500px; height: 30px; flex: none;
  background-image: radial-gradient(circle at 1.500px 1.500px, #d0d0d0 1px, transparent 1.300px), radial-gradient(circle at 1.500px 1.500px, #e0e0e0 1px, transparent 1.300px);
  background-size: 4px 4px; background-position: 1px 0, 3px 2px;
}
.g2 { margin-left: 6px; }
.b { width: 35px; height: 34px; flex: none; display: flex; align-items: center; justify-content: center; }
.b svg { width: 32px; height: 32px; flex: none; overflow: visible; }
.on { width: 33px; margin: 0 1px; background: #dcdcdc; border: 1px solid #9a9a9a; border-radius: 3px; }
.on svg { margin: -1px; }
.n32 { width: 32px; } .n33 { width: 33px; } .n34 { width: 33.500px; } .w37 { width: 37px; }
.mr3 { margin-right: 3px; }
.sep { width: 14px; height: 30px; flex: none; display: flex; justify-content: center; }
.s12 { width: 12px; }
.s23 { width: 23px; justify-content: flex-end; padding-right: 1px; }
.d { width: 11px; height: 34px; flex: none; position: relative; }
.d::after {
  content: ""; position: absolute; left: 0; top: 15px; width: 0; height: 0;
  border-left: 5px solid transparent; border-right: 5px solid transparent; border-top: 5px solid #000;
}
.gd::after { border-top-color: #a8a8a8; }

.spin {
  width: 53px; height: 20px; margin-left: 2px; flex: none; display: flex; border: 1px solid #a9a9a9; border-radius: 2px; background: #f0f0f0;
}
.val { flex: 1; color: #8a8a8a; font-family: "Liberation Sans", sans-serif; font-size: 12px; line-height: 18px; text-align: center; }
.arrows { width: 16px; flex: none; display: flex; flex-direction: column; border-left: 1px solid #a9a9a9; }
.arrows i { flex: 1; position: relative; background: #e8e8e8; }
.arrows i::after { content: ""; position: absolute; left: 3px; top: 3px; border-left: 4px solid transparent; border-right: 4px solid transparent; }
.arrows .up { border-bottom: 1px solid #a9a9a9; }
.arrows .up::after { border-bottom: 4px solid #8a8a8a; }
.arrows .dn::after { border-top: 4px solid #8a8a8a; }

.main { flex: 1; min-height: 0; display: flex; }
.sidebar { width: 51px; flex: none; border-right: 2px solid #b5b5b5; overflow: hidden; padding-top: 7px; }
.hgrip {
  height: 4px; margin: 0 4px 0 4px;
  background-image: radial-gradient(circle at 1px 1px, #c8c8c8 1px, transparent 1.200px);
  background-size: 4px 2px;
}
.s { width: 49px; height: 34px; display: flex; align-items: center; justify-content: center; position: relative; }
.s svg { width: 32px; height: 32px; flex: none; overflow: visible; }
.sd svg { margin-left: -10px; }
.sd .d { position: absolute; left: 36px; top: 0; height: 34px; }
.stub { width: 18px; height: 6px; margin: 7px 0 0 15px; border: 1px solid #999; background: #fff; }

.dock { width: 460px; flex: none; display: flex; flex-direction: column; min-height: 0; }
.dockhead { height: 19px; flex: none; display: flex; align-items: center; padding: 0 1.500px 0 1px; gap: 1px; }
.hdots {
  flex: 1; height: 4px;
  background-image: radial-gradient(circle at 1px 1px, #c8c8c8 1px, transparent 1.200px);
  background-size: 4px 2px;
}
.docktitle { width: 32px; margin-left: 2px; text-align: center; font-size: 9px; color: #222; }
.dbtn { width: 14px; height: 14px; margin-left: 1.500px; flex: none; border: 1px solid #8a8a8a; border-radius: 3px; background: #f4f4f4; padding: .500px; display: block; }
.dbtn svg { width: 11px; height: 11px; display: block; }
.tree {
  flex: 1; position: relative; background: #fff; border: 2px solid #5da5e8; border-top: 1px solid #a8a8a8; border-bottom: 0; padding-top: 2px;
}
.vline { position: absolute; left: 10px; top: 17px; height: 66px; border-left: 1px dotted #888; }
.row { height: 16px; display: flex; align-items: center; position: relative; padding-left: 5px; }
.sel { background: #3399ff; outline: 1px dotted #d07010; outline-offset: -1px; }
.exp { width: 9px; height: 9px; flex: none; border: 1px solid #777; background: #f0f0f0 linear-gradient(#777,#777) center / 5px 1px no-repeat; position: relative; z-index: 1; }
.lnk { width: 9px; flex: none; border-top: 1px dotted #888; }
.chk { width: 13px; height: 13px; flex: none; border: 1px solid #c8c8c8; background: #fafafa; border-radius: 1px; }
.checked { border-color: #fff; background: #fff; position: relative; }
.checked::after {
  content: ""; position: absolute; inset: 1px; background:
    linear-gradient(45deg, transparent 36%, #000 36%, #000 64%, transparent 64%),
    linear-gradient(-45deg, transparent 36%, #000 36%, #000 64%, transparent 64%);
}
.tl { width: 16px; height: 16px; flex: none; margin-left: 8px; }
.name { margin-left: 4px; font-family: "Liberation Sans", sans-serif; font-weight: 700; font-size: 12.300px; color: #000; }
.cur { color: #fff; text-decoration: underline; }
.child { padding-left: 30px; }
.cl { width: 12px; height: 9px; margin-top: -9px; margin-right: 1px; flex: none; border-left: 1px dotted #888; border-bottom: 1px dotted #888; }
.tall .cl { height: 9px; }
.box { width: 16px; height: 15px; flex: none; }
.dark { background: #1f1c10; }
.blk { background: #000; height: 12px; }
.yl { width: 16px; height: 4px; flex: none; background: #ffff00; }

.split {
  width: 8px; flex: none; border-right: 1px solid #a8a8a8;
  background-image: radial-gradient(circle at 1.500px 1.500px, #c8c8c8 1px, transparent 1.300px);
  background-size: 100% 4px; background-position: 2px 0; background-repeat: repeat-y;
}
.canvas { flex: 1; min-width: 0; background: #fff; border-top: 1px solid #d0d0d0; border-left: 0; margin-top: 1px; overflow: hidden; }
.map { width: 600px; height: 497px; display: block; }
.ln { fill: none; stroke: #1f1c10; stroke-width: 14; }
.up15 { stroke-width: 15; }
.yw { fill: none; stroke: #ffff00; stroke-width: 4; stroke-linejoin: miter; }

.st { font-family: "Liberation Sans", sans-serif; fill: #333; }
.st8 { font-size: 8px; font-weight: 700; }
.st9b { font-size: 9px; font-weight: 700; fill: #333; }
.st12 { font-size: 12px; font-weight: 700; }
.st14 { font-size: 14px; font-weight: 700; }
.st16 { font-size: 17px; font-weight: 700; }
.st20b { font-size: 19px; font-weight: 700; }
.st22 { font-size: 24px; }
.serif { font-family: "Liberation Serif", serif; }
.w { fill: #fff; }
.g5 { fill: #666; }
.g6 { fill: #777; }
.st9b.g7 { fill: #777; }
.st9b.red { fill: #c5262c; }
.i2 { font-style: italic; }
.pur { fill: #6b3f7a; }
.pink { fill: #e0209a; font-weight: 400; }
.grn { fill: #2aa52a; }
.lime { fill: #b5d334; }
```
